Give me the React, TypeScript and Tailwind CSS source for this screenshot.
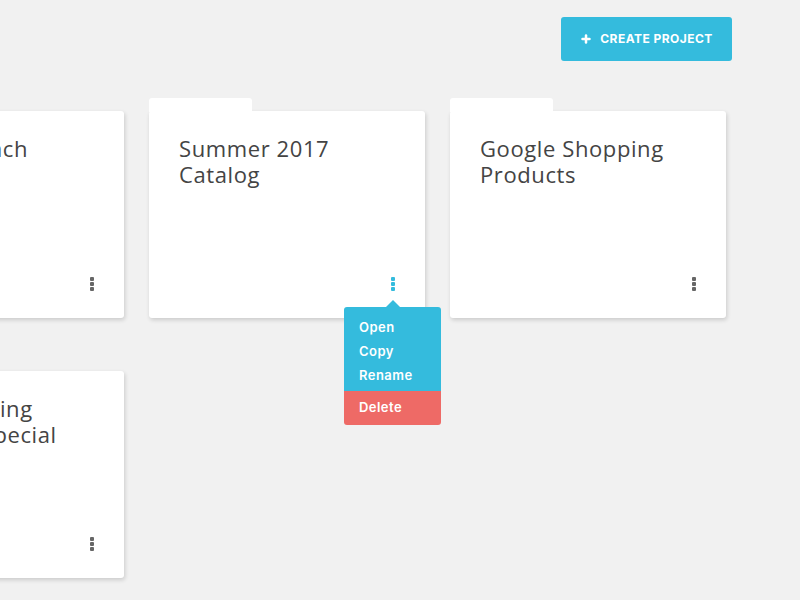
import React from 'react';
import { Plus } from 'lucide-react';

const projects = [
  { id: 1, lines: ['Brand Launch'] },
  { id: 2, lines: ['Summer 2017', 'Catalog'], tab: true, open: true },
  { id: 3, lines: ['Google Shopping', 'Products'], tab: true },
  { id: 4, lines: ['Sport Clothing', 'Seasonal Special'] },
];

const Dots = ({ active }: { active?: boolean }) => (
  <div className="flex flex-col gap-[1px]">
    <span className={`w-[4px] h-[4px] rounded-[1px] ${active ? 'bg-[#34bbdd]' : 'bg-[#666666]'}`} />
    <span className={`w-[4px] h-[4px] rounded-[1px] ${active ? 'bg-[#34bbdd]' : 'bg-[#666666]'}`} />
    <span className={`w-[4px] h-[4px] rounded-[1px] ${active ? 'bg-[#34bbdd]' : 'bg-[#666666]'}`} />
  </div>
);

const Menu = () => (
  <div className="absolute left-[195px] top-[196px] w-[97px] z-10 font-['Inter',sans-serif] text-[13px] font-semibold text-white tracking-[0.45px]">
    <div className="absolute -top-[7px] left-[42px] w-0 h-0 border-x-[7px] border-x-transparent border-b-[7px] border-b-[#34bbdd]" />
    <div className="bg-[#34bbdd] rounded-t-[3px] pt-[8px] pb-[4px] px-[15px]">
      <div className="h-[24px] leading-[24px]">Open</div>
      <div className="h-[24px] leading-[24px]">Copy</div>
      <div className="h-[24px] leading-[24px]">Rename</div>
    </div>
    <div className="bg-[#ee6a66] rounded-b-[3px] h-[34px] leading-[32px] px-[15px]">Delete</div>
  </div>
);

const App = () => {
  return (
    <div className="w-[800px] h-[600px] overflow-hidden bg-[#f1f1f1] font-['Inter',sans-serif]">
      <div className="flex justify-end pt-[17px] pr-[68px]">
        <button className="w-[171px] h-[44px] rounded-[3px] bg-[#34bbdd] text-white flex items-center justify-center gap-[8px] text-[12px] font-bold tracking-[0.45px]">
          <Plus className="w-[12px] h-[12px]" strokeWidth={5} />
          CREATE PROJECT
        </button>
      </div>
      <div className="grid grid-cols-[276px_276px_276px] gap-x-[25px] gap-y-[53px] ml-[-152px] mt-[50px]">
        {projects.map(p => (
          <div key={p.id} className="relative h-[207px] bg-white rounded-[3px] shadow-[1px_2px_4px_rgba(0,0,0,0.16)] pt-[24px] pl-[30px] pr-[12px]">
            {p.tab && <div className="absolute -top-[13px] left-0 w-[103px] h-[14px] bg-white rounded-t-[3px]" />}
            <div className="font-['Open_Sans',sans-serif] text-[22px] leading-[26px] tracking-[0.6px] text-[#444444] whitespace-nowrap">
              {p.lines.map(line => <div key={line}>{line}</div>)}
            </div>
            <div className="absolute right-[30px] bottom-[27px]">
              <Dots active={p.open} />
            </div>
            {p.open && <Menu />}
          </div>
        ))}
      </div>
    </div>
  );
};

export default App;
